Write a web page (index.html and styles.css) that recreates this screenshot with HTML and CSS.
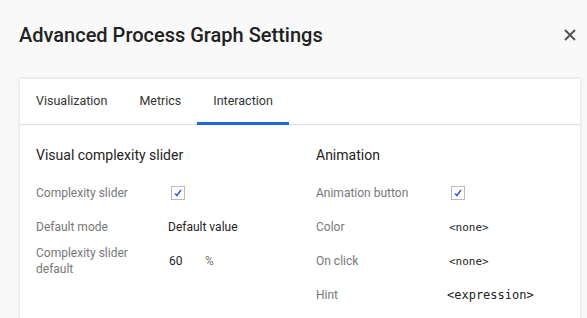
FILE: index.html
```html
<html lang="en">
<head>
  <meta charset="UTF-8" />
  <title>Advanced Process Graph Settings</title>
  <link rel="stylesheet" href="styles.css">
</head>
<body>

  <!-- Header -->
  <div class="dialog-header">
    <h1 class="dialog-title">Advanced Process Graph Settings</h1>
    <button class="close-btn" aria-label="Close">
      <svg width="12" height="12" viewBox="0 0 12 12">
        <path d="M1 1 L11 11 M11 1 L1 11" stroke="#555" stroke-width="2" fill="none" />
      </svg>
    </button>
  </div>

  <!-- Card -->
  <div class="card">
    <div class="tabs">
      <div class="tab">Visualization</div>
      <div class="tab">Metrics</div>
      <div class="tab active">Interaction</div>
    </div>

    <div class="panel">
      <div class="section">
        <h2 class="section-title">Visual complexity slider</h2>
        <div class="row">
          <div class="label">Complexity slider</div>
          <div class="value">
            <span class="checkbox">
              <svg width="10" height="10" viewBox="0 0 10 10"><path d="M2 5.5 L4 7.5 L8 2" stroke="#3b55f0" stroke-width="1.6" fill="none" /></svg>
            </span>
          </div>
        </div>
        <div class="row">
          <div class="label">Default mode</div>
          <div class="value">Default value</div>
        </div>
        <div class="row">
          <div class="label">Complexity slider<br>default</div>
          <div class="value"><span class="num">60</span><span class="unit">%</span></div>
        </div>
      </div>

      <div class="section">
        <h2 class="section-title">Animation</h2>
        <div class="row">
          <div class="label">Animation button</div>
          <div class="value">
            <span class="checkbox">
              <svg width="10" height="10" viewBox="0 0 10 10"><path d="M2 5.5 L4 7.5 L8 2" stroke="#3b55f0" stroke-width="1.6" fill="none" /></svg>
            </span>
          </div>
        </div>
        <div class="row">
          <div class="label">Color</div>
          <div class="value mono">&lt;none&gt;</div>
        </div>
        <div class="row">
          <div class="label">On click</div>
          <div class="value mono">&lt;none&gt;</div>
        </div>
        <div class="row">
          <div class="label">Hint</div>
          <div class="value mono big">&lt;expression&gt;</div>
        </div>
      </div>
    </div>
  </div>

</body>
</html>
```

FILE: styles.css
```css
* {
  margin: 0;
  padding: 0;
  box-sizing: border-box;
}

body {
  background: #f9f9f9;
  font-family: Roboto, "Noto Sans", sans-serif;
  color: #212121;
  overflow: hidden;
}

/* Header */
.dialog-header {
  display: flex;
  align-items: center;
  justify-content: space-between;
  height: 70px;
  padding: 0 10px 0 19px;
}

.dialog-title {
  font-size: 20px;
  font-weight: 500;
  color: #212121;
}

.close-btn {
  border: none;
  background: none;
  width: 14px;
  height: 14px;
  display: flex;
  align-items: center;
  justify-content: center;
  cursor: pointer;
}

/* Card */
.card {
  margin: 9px 7px 0 20px;
  background: #fff;
  box-shadow: 0 0 4px rgba(0, 0, 0, 0.15);
  height: 400px;
}

.tabs {
  display: flex;
  border-bottom: 1px solid #ddd;
  height: 46px;
}

.tab {
  padding: 0 16px;
  font-size: 12.5px;
  color: #333;
  display: flex;
  align-items: center;
  border-bottom: 3px solid transparent;
  margin-bottom: -1px;
}

.tab.active {
  border-bottom-color: #2367e0;
}

.panel {
  display: flex;
  padding: 22px 0 0;
}

.section {
  width: 280px;
  padding: 0 16px;
}

.section-title {
  font-size: 14px;
  font-weight: 400;
  color: #222;
  margin-bottom: 13px;
}

.row {
  display: flex;
  align-items: center;
  min-height: 34px;
}

.label {
  width: 132px;
  font-size: 12px;
  line-height: 16px;
  color: #777;
}

.value {
  font-size: 12px;
  color: #222;
  display: flex;
  align-items: center;
}

.checkbox {
  width: 14px;
  height: 14px;
  margin-left: 3px;
  border: 1px solid #bbb;
  display: flex;
  align-items: center;
  justify-content: center;
}

.num {
  margin-left: 1px;
  width: 36px;
}

.unit {
  color: #777;
}

.mono {
  font-family: "DejaVu Sans Mono", monospace;
  font-size: 11px;
  margin-left: 1px;
}

.mono.big {
  font-size: 12px;
  margin-left: -1px;
}
```
